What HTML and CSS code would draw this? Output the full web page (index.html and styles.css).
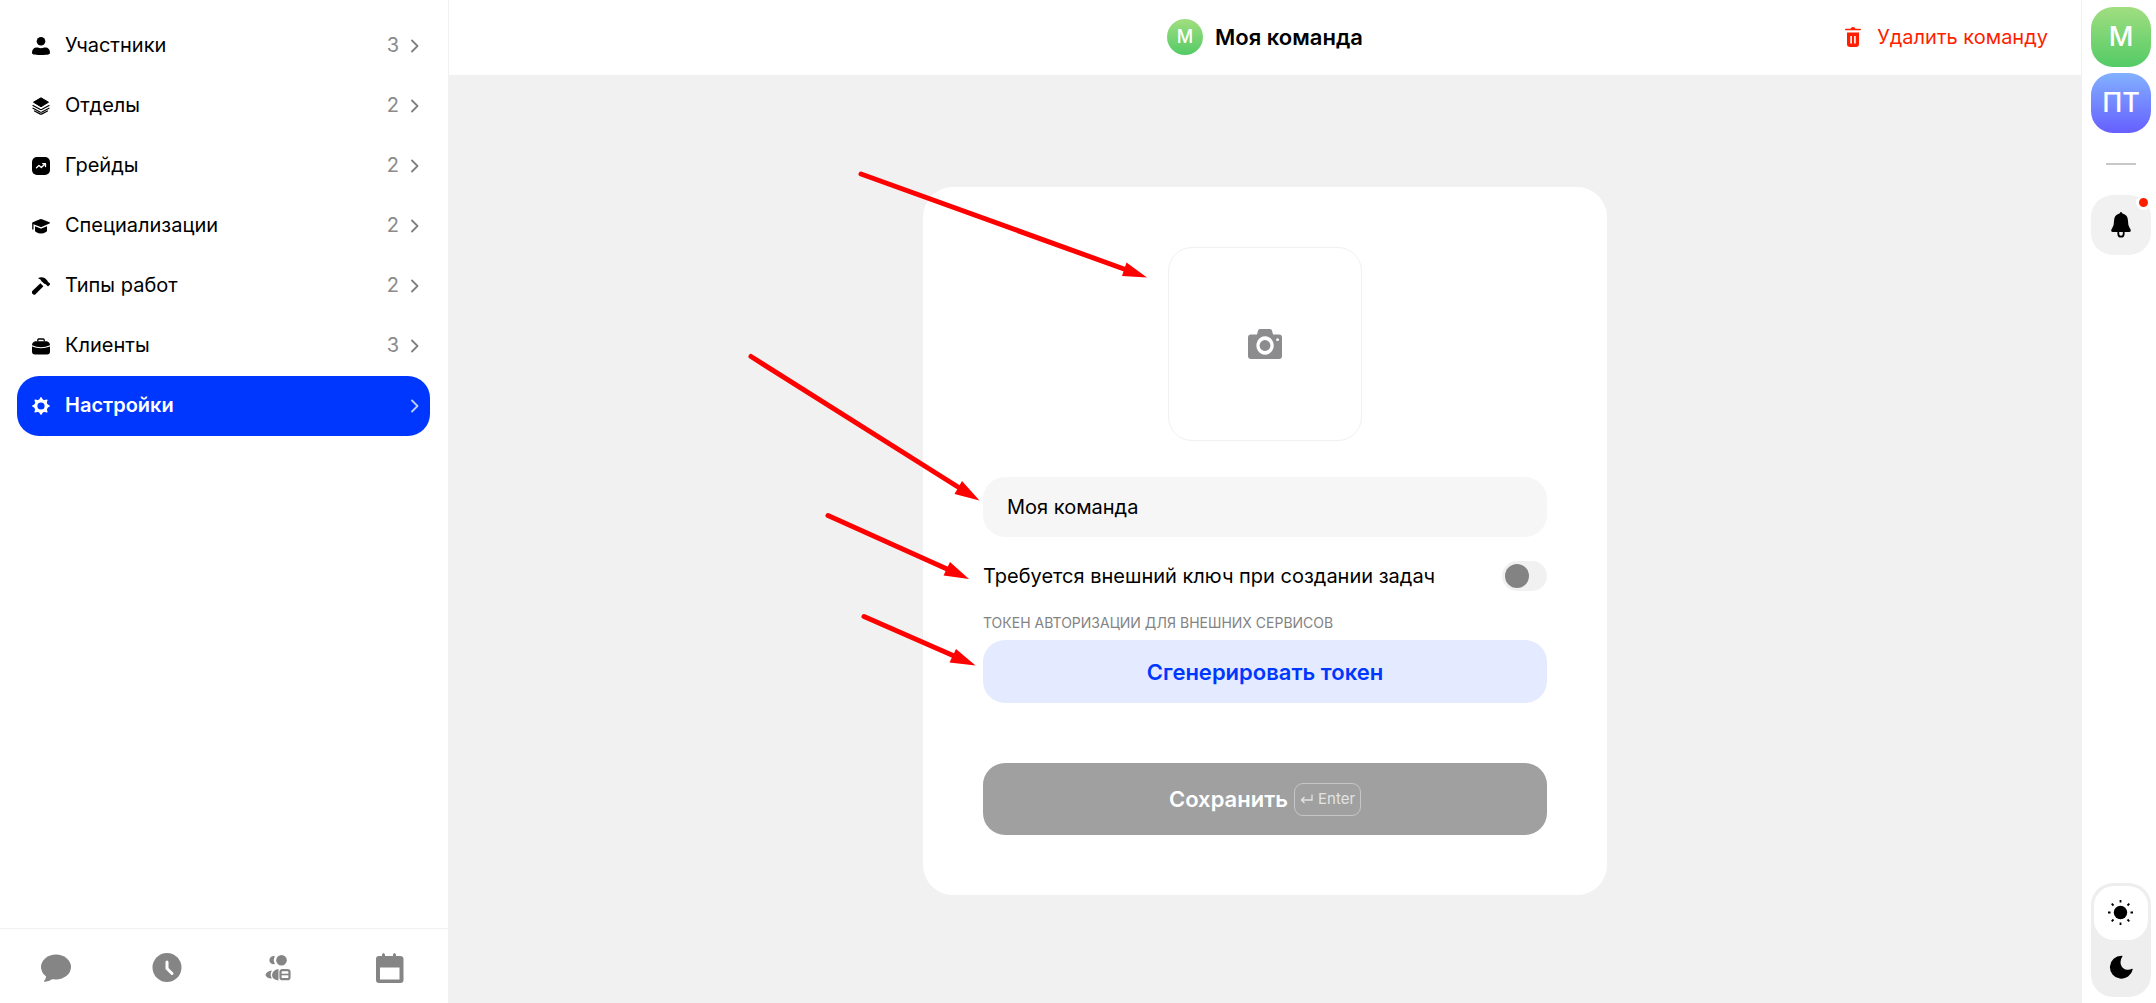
FILE: index.html
```html
<!DOCTYPE html>
<html lang="ru">
<head>
    <meta charset="UTF-8">
    <meta name="viewport" content="width=device-width, initial-scale=1.0">
    <title>Моя команда</title>
    <link rel="stylesheet" href="styles.css">
</head>
<body>
    <svg class="sprite" aria-hidden="true">
        <symbol id="chevron" viewBox="0 0 8 14">
            <path d="M1 1.5 6.5 7 1 12.5" fill="none" stroke="currentColor" stroke-width="1.8" stroke-linecap="round" stroke-linejoin="round"/>
        </symbol>
    </svg>

    <div class="app">
        <aside class="sidebar">
            <nav class="menu">
                <a class="menu-item" href="#members">
                    <svg class="menu-icon" viewBox="0 0 18 18"><circle cx="9" cy="4.3" r="4.3"/><path d="M0 15.5c0-3 2-5 4.600-5 1.400 0 2.400.7 4.400.7s3-.7 4.400-.7c2.600 0 4.600 2 4.600 5 0 1.800-1 2.500-9 2.500s-9-.7-9-2.500z"/></svg>
                    <span class="menu-label">Участники</span>
                    <span class="menu-count">3</span>
                    <svg class="chevron"><use href="#chevron"/></svg>
                </a>
                <a class="menu-item" href="#departments">
                    <svg class="menu-icon" viewBox="0 0 18 18"><path d="M9 .8 16.500 5.200 9 9.800 1.500 5.200z" stroke="currentColor" stroke-linejoin="round"/><path d="M1 8.500l7 3.800q1 .5 2 0l7-3.800M1 11.200l7 3.800q1 .5 2 0l7-3.800M2.500 14l5.500 2.900q1 .5 2 0l5.500-2.900" fill="none" stroke="currentColor" stroke-width="1.200" stroke-linecap="round"/></svg>
                    <span class="menu-label">Отделы</span>
                    <span class="menu-count">2</span>
                    <svg class="chevron"><use href="#chevron"/></svg>
                </a>
                <a class="menu-item" href="#grades">
                    <svg class="menu-icon" viewBox="0 0 18 18"><rect width="18" height="18" rx="5"/><path d="M4.500 10.800 7 8.500l2.300 2 4-3.700M10.700 6.700h2.800v2.800" fill="none" stroke="#fff" stroke-width="1.300" stroke-linecap="round" stroke-linejoin="round"/></svg>
                    <span class="menu-label">Грейды</span>
                    <span class="menu-count">2</span>
                    <svg class="chevron"><use href="#chevron"/></svg>
                </a>
                <a class="menu-item" href="#specializations">
                    <svg class="menu-icon" viewBox="0 0 18 18"><path d="M8 2.200q1-.4 2 0l7.500 3q1 .6 0 1.200L10 9.700q-1 .4-2 0L1.500 7.200v5.300H.2V6.600q-.4-.8.500-1.400z"/><path d="M3 9.200l5 2.100q1 .4 2 0l5-2.100v4.300q0 1-1 1.600-5 3-10 0-1-.6-1-1.600z"/></svg>
                    <span class="menu-label">Специализации</span>
                    <span class="menu-count">2</span>
                    <svg class="chevron"><use href="#chevron"/></svg>
                </a>
                <a class="menu-item" href="#work-types">
                    <svg class="menu-icon" viewBox="0 0 18 18"><path d="M6 1.200Q9.500-.8 13 1.300l2.300 2.300q.2.900.8 1.300l1.900 1.600q.4.500 0 1L16.500 9q-.5.400-1 0l-1.200-1.300q-.6-.8-1.600-.6L9.500 4.200Q9.200 2 6 1.200z"/><path d="M8.400 6.200l3 3-7.900 8.100q-1.200 1-2.400 0l-.9-.9q-.9-1.200.1-2.300z"/></svg>
                    <span class="menu-label">Типы работ</span>
                    <span class="menu-count">2</span>
                    <svg class="chevron"><use href="#chevron"/></svg>
                </a>
                <a class="menu-item" href="#clients">
                    <svg class="menu-icon" viewBox="0 0 18 18"><path d="M5.800 4.500V3q0-1 1-1h4.400q1 0 1 1v1.500" fill="none" stroke="currentColor" stroke-width="1.300"/><path d="M3 4.200h12q3 1 3 4-9 4-18 0 0-3 3-4z"/><path d="M0 9.500q9 3.600 18 0v5q0 3-3 3H3q-3 0-3-3z"/></svg>
                    <span class="menu-label">Клиенты</span>
                    <span class="menu-count">3</span>
                    <svg class="chevron"><use href="#chevron"/></svg>
                </a>
                <a class="menu-item active" href="#settings" aria-current="page">
                    <svg class="menu-icon" viewBox="0 0 18 18"><circle cx="9" cy="9" r="5.200" fill="none" stroke="currentColor" stroke-width="3.200"/><g><path id="tooth" d="M7 3 8.400.4Q9-.4 9.600.4L11 3z"/><use href="#tooth" transform="rotate(45 9 9)"/><use href="#tooth" transform="rotate(90 9 9)"/><use href="#tooth" transform="rotate(135 9 9)"/><use href="#tooth" transform="rotate(180 9 9)"/><use href="#tooth" transform="rotate(225 9 9)"/><use href="#tooth" transform="rotate(270 9 9)"/><use href="#tooth" transform="rotate(315 9 9)"/></g></svg>
                    <span class="menu-label">Настройки</span>
                    <svg class="chevron"><use href="#chevron"/></svg>
                </a>
            </nav>

            <nav class="tabbar">
                <a class="tab" href="#chat" aria-label="Чат">
                    <svg viewBox="0 0 30 30"><ellipse cx="15" cy="14" rx="15" ry="12.500"/><path d="M4 21q2.500 3-1 7-.3 1 1 .7 5-.6 8.500-3.200z"/></svg>
                </a>
                <a class="tab" href="#time" aria-label="Время">
                    <svg viewBox="0 0 30 30"><circle cx="15" cy="14.500" r="14.500"/><path d="M15 9v6.500l5 5" fill="none" stroke="#fff" stroke-width="3" stroke-linecap="round" stroke-linejoin="round"/></svg>
                </a>
                <a class="tab" href="#team" aria-label="Команда">
                    <svg viewBox="0 0 30 30"><path d="M11 3.500q-2.500 3.500 0 7.300a4 4 0 1 1 0-7.300z"/><circle cx="17.500" cy="7.300" r="5.300"/><path d="M8 17.600q-2.500 4 0 8Q2 25 1.500 22q.8-3.800 6.500-4.400zM14.500 16v11.500Q8 26.500 8 22q.5-5 6.500-6z"/><rect x="16.500" y="17.200" width="9" height="9" rx="2" fill="none" stroke="currentColor" stroke-width="2.200"/><path d="M17 21.500h8" stroke="currentColor" stroke-width="1.600"/></svg>
                </a>
                <a class="tab" href="#calendar" aria-label="Календарь">
                    <svg viewBox="0 0 30 30"><path d="M4 3h3V1.500q1.500-3 3 0V3h8V1.500q1.500-3 3 0V3h4q3.500 0 3.500 3v21q0 3-3 3H4q-3 0-3-3V6q0-3 3-3zm1 11.500V26.500h19.500v-12z" fill-rule="evenodd"/></svg>
                </a>
            </nav>
        </aside>

        <main class="main">
            <header class="topbar">
                <div class="team-title">
                    <span class="avatar-small">М</span>
                    <h1>Моя команда</h1>
                </div>
                <button class="delete-btn" type="button">
                    <svg viewBox="0 0 16 20"><path d="M.8 2.500h14.400" stroke="currentColor" stroke-width="1.600" stroke-linecap="round"/><path d="M5.500 2Q6 0 8 0t2.500 2z"/><path d="M2 5.500h12V17q0 3-3 3H5q-3 0-3-3zM5.300 9v7.500h1.600V9zm3.800 0v7.500h1.600V9z" fill-rule="evenodd"/></svg>
                    Удалить команду
                </button>
            </header>

            <div class="stage">
                <form class="card">
                    <button class="photo" type="button" aria-label="Загрузить фото">
                        <svg viewBox="0 0 34 30"><path d="M9 5.500 10 1.500Q10.500 0 12 0h10q1.500 0 2 1.500l1 4h6q3 0 3 3V27q0 3-3 3H3q-3 0-3-3V8.500q0-3 3-3zM17 7.300a8.700 9.200 0 1 0 .1 0zM29.500 9.300a1.400 1.400 0 1 0 .1 0z" fill-rule="evenodd"/><circle cx="17" cy="16.500" r="5.400"/></svg>
                    </button>

                    <input class="name-input" type="text" value="Моя команда" aria-label="Название команды">

                    <div class="switch-row">
                        <label for="externalKey">Требуется внешний ключ при создании задач</label>
                        <input class="switch" type="checkbox" id="externalKey">
                    </div>

                    <p class="caption">ТОКЕН АВТОРИЗАЦИИ ДЛЯ ВНЕШНИХ СЕРВИСОВ</p>
                    <button class="token-btn" type="button">Сгенерировать токен</button>

                    <button class="save-btn" type="submit">
                        Сохранить
                        <span class="key"><svg viewBox="0 0 13 10"><path d="M12 .5v5.500H1.500M4.500 3 1.500 6l3 3" fill="none" stroke="currentColor" stroke-width="1.300"/></svg>Enter</span>
                    </button>

                    <!-- pointers to the fields of the form -->
                    <svg class="arrows" viewBox="0 0 410 510" aria-hidden="true">
                        <path d="M118 7 381 102M8 189.500 215 320M85 348.500 204 402M121 449.500 210 488.500"/>
                        <polygon points="404,110.500 383.500,95.500 379,109"/>
                        <polygon points="236.500,333.500 219,314 211.500,327"/>
                        <polygon points="226,412 207,395 200.500,408.500"/>
                        <polygon points="232.500,498.500 213,482 206.500,495.500"/>
                    </svg>
                </form>
            </div>
        </main>

        <aside class="rail">
            <a class="team team-green" href="#team-m">М</a>
            <a class="team team-blue" href="#team-pt">ПТ</a>
            <hr class="divider">
            <button class="bell" type="button" aria-label="Уведомления">
                <svg viewBox="0 0 20 26"><path d="M10 0q1.200 0 1.400 1.600Q17 3 17 9q0 4.500 1.600 6.800 1.400 2 1.200 3.200-.3 1-1.800 1H2Q.5 20 .2 19q-.2-1.200 1.200-3.200Q3 13.500 3 9q0-6 5.600-7.400Q8.800 0 10 0z"/><path d="M7.300 19.500v2.200a2.700 3 0 0 0 5.400 0v-2.200" fill="none" stroke="currentColor" stroke-width="1.800"/></svg>
                <span class="dot"></span>
            </button>
            <div class="theme">
                <button class="theme-btn selected" type="button" aria-label="Светлая тема">
                    <svg viewBox="0 0 26 26"><circle cx="12.500" cy="12.500" r="6.700"/><path d="M12.500 0v2.500M12.500 22.500V25M0 12.500h2.500M22.500 12.500H25M3.700 3.700l1.800 1.800M19.500 19.500l1.800 1.800M3.700 21.300l1.800-1.800M19.500 5.500l1.800-1.800" stroke="currentColor" stroke-width="1.800"/></svg>
                </button>
                <button class="theme-btn" type="button" aria-label="Тёмная тема">
                    <svg viewBox="0 0 26 26"><path d="M14.500 2.200Q11.800 6 12.800 10.500q1.500 4.500 6 5.300 3 .3 5.200-1 .8-.3.700.7A11.500 11.500 0 1 1 13.500 1.700q1.500-.1 1 .5z"/></svg>
                </button>
            </div>
        </aside>
    </div>
</body>
</html>
```
FILE: styles.css
```css
* {
    box-sizing: border-box;
}

body {
    margin: 0;
    font-family: Inter, "Liberation Sans", sans-serif;
    font-size: 20px;
    line-height: 24px;
    color: #000;
    background-color: #fff;
}

a {
    color: inherit;
    text-decoration: none;
}

button,
input {
    margin: 0;
    padding: 0;
    border: none;
    background: none;
    font: inherit;
    color: inherit;
}

button {
    cursor: pointer;
}

svg {
    display: block;
    flex: none;
    fill: currentColor;
}

.sprite {
    position: absolute;
    width: 0;
    height: 0;
}

.app {
    display: flex;
    min-height: 100vh;
}

/* left menu */
.sidebar {
    display: flex;
    flex-direction: column;
    flex: none;
    width: 449px;
    border-right: 1px solid #f1f1f1;
}

.menu {
    flex: 1;
    padding: 16px 18px 16px 17px;
}

.menu-item {
    display: flex;
    align-items: center;
    height: 60px;
    padding: 0 11px 0 15px;
    border-radius: 22px;
}

.menu-icon {
    width: 18px;
    height: 18px;
    margin-right: 15px;
}

.menu-label,
.menu-count {
    padding-bottom: 2px;
}

.menu-label {
    flex: 1;
}

.menu-count {
    margin-right: 12px;
    color: #8a8a8a;
}

.chevron {
    width: 8px;
    height: 14px;
    color: #808080;
}

.menu-item.active {
    background-color: #0037ff;
    color: #fff;
    font-weight: 600;
}

.active .chevron {
    color: #bfcdff;
}

.tabbar {
    display: flex;
    height: 75px;
    padding-right: 2px;
    border-top: 1px solid #f1f1f1;
    color: #858585;
}

.tab {
    display: flex;
    flex: 1;
    align-items: center;
    justify-content: center;
    padding-top: 4px;
}

.tab svg {
    width: 30px;
    height: 30px;
}

/* center */
.main {
    display: flex;
    flex-direction: column;
    flex: 1;
    background-color: #f1f1f1;
}

.topbar {
    display: grid;
    grid-template-columns: 1fr auto 1fr;
    align-items: center;
    height: 75px;
    padding: 0 33px 2px;
    background-color: #fff;
}

.team-title {
    display: flex;
    grid-column: 2;
    align-items: center;
    gap: 12px;
}

.team-title h1 {
    margin: 0;
    font-size: 22px;
    font-weight: 600;
}

.avatar-small {
    width: 36px;
    height: 36px;
    border-radius: 50%;
    background: linear-gradient(#a1de80, #53cb66);
    color: #fff;
    font-size: 18px;
    font-weight: 500;
    line-height: 36px;
    text-align: center;
}

.delete-btn {
    display: flex;
    grid-column: 3;
    justify-self: end;
    align-items: center;
    gap: 16px;
    color: #ff1e00;
}

.delete-btn svg {
    width: 16px;
    height: 20px;
}

.stage {
    display: flex;
    flex: 1;
    justify-content: center;
    align-items: flex-start;
    padding: 112px 24px 60px;
}

.card {
    position: relative;
    display: flex;
    flex-direction: column;
    width: 100%;
    max-width: 684px;
    padding: 60px;
    border-radius: 30px;
    background-color: #fff;
}

.photo {
    display: flex;
    align-self: center;
    align-items: center;
    justify-content: center;
    width: 194px;
    height: 194px;
    margin-bottom: 36px;
    border: 1px solid #f1f1f1;
    border-radius: 24px;
    color: #8c8c8e;
}

.photo svg {
    width: 34px;
    height: 30px;
}

.name-input {
    height: 60px;
    padding: 0 24px;
    border-radius: 22px;
    background-color: #f6f6f6;
}

.switch-row {
    display: flex;
    align-items: center;
    justify-content: space-between;
    height: 30px;
    margin: 24px 0 20px;
}

.switch {
    width: 45px;
    height: 30px;
    padding: 3px;
    border-radius: 15px;
    background-color: #f1f1f1;
    appearance: none;
    cursor: pointer;
}

.switch::before {
    content: "";
    display: block;
    width: 24px;
    height: 24px;
    border-radius: 50%;
    background-color: #838383;
}

.switch:checked::before {
    margin-left: auto;
    background-color: #0037ff;
}

.caption {
    margin: 0 0 5px;
    color: #838383;
    font-size: 14px;
}

.token-btn {
    height: 63px;
    margin-bottom: 60px;
    border-radius: 22px;
    background-color: #e4eaff;
    color: #0037ff;
    font-size: 22px;
    font-weight: 600;
}

.save-btn {
    display: flex;
    align-items: center;
    justify-content: center;
    gap: 6px;
    height: 72px;
    border-radius: 22px;
    background-color: #a0a0a0;
    color: #fff;
    font-size: 22px;
    font-weight: 600;
}

.key {
    display: flex;
    align-items: center;
    gap: 5px;
    height: 33px;
    padding: 0 5px;
    border: 1px solid #c6c6c6;
    border-radius: 9px;
    color: #e3e3e3;
    font-size: 15px;
    font-weight: 400;
}

.key svg {
    width: 13px;
    height: 10px;
}

.arrows {
    position: absolute;
    top: -20px;
    left: -180px;
    width: 410px;
    height: 510px;
    fill: #f00;
    stroke-linecap: round;
    pointer-events: none;
}

.arrows path {
    fill: none;
    stroke: #f00;
    stroke-width: 5;
}

/* right rail */
.rail {
    display: flex;
    flex-direction: column;
    flex: none;
    align-items: center;
    width: 75px;
    padding: 7px 0 6px 4px;
    border-left: 1px solid #f1f1f1;
}

.team {
    width: 60px;
    height: 60px;
    margin-bottom: 6px;
    border-radius: 22px;
    color: #fff;
    font-size: 27px;
    font-weight: 500;
    line-height: 60px;
    text-align: center;
}

.team-green {
    background: linear-gradient(#a1de80, #53cb66);
}

.team-blue {
    background: linear-gradient(#82b1ff, #665fff);
}

.divider {
    width: 30px;
    height: 2px;
    margin: 24px 0 30px;
    border: none;
    background-color: #c8c8c8;
}

.bell {
    position: relative;
    display: flex;
    align-items: center;
    justify-content: center;
    width: 60px;
    height: 60px;
    border-radius: 22px;
    background-color: #f1f1f1;
}

.bell svg {
    width: 20px;
    height: 26px;
}

.dot {
    position: absolute;
    top: 0;
    right: 0;
    width: 15px;
    height: 15px;
    border: 3px solid #fff;
    border-radius: 50%;
    background-color: #ff1e00;
}

.theme {
    width: 60px;
    margin-top: auto;
    padding: 3px;
    border-radius: 22px;
    background-color: #eee;
}

.theme-btn {
    display: flex;
    align-items: center;
    justify-content: center;
    width: 54px;
    height: 54px;
    border-radius: 20px;
}

.theme-btn.selected {
    background-color: #fff;
}

.theme-btn svg {
    width: 26px;
    height: 26px;
}
```
